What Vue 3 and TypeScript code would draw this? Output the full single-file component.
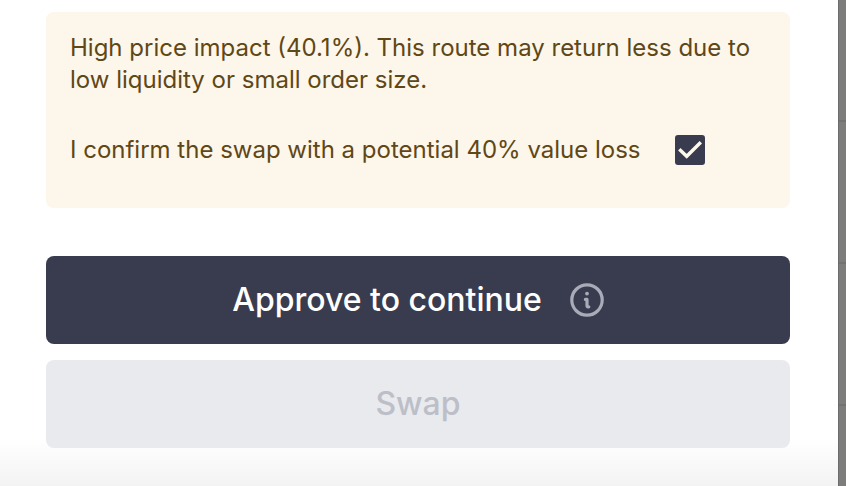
<script setup lang="ts">
import { computed, ref } from 'vue'

const priceImpact = 40.1
const confirmed = ref<boolean>(true)
const approved = ref<boolean>(false)
const valueLoss = computed<number>(() => Math.round(priceImpact))
</script>

<template>
  <div class="page">
    <main class="panel">
      <section class="warning">
        <p class="message">
          High price impact ({{ priceImpact }}%). This route may return less due to low liquidity or small order size.
        </p>
        <div class="confirm">
          <label for="confirm-loss">I confirm the swap with a potential {{ valueLoss }}% value loss</label>
          <span class="box">
            <input id="confirm-loss" v-model="confirmed" type="checkbox" />
            <svg v-if="confirmed" class="tick" viewBox="0 0 30 30" aria-hidden="true">
              <path d="M4.3 14.3 11.7 21.3 25.8 7.3" />
            </svg>
          </span>
        </div>
      </section>
      <div class="actions">
        <button class="action approve" type="button" :disabled="!confirmed" @click="approved = true">
          Approve to continue
          <svg class="info" viewBox="0 0 34 34" aria-hidden="true">
            <circle cx="17" cy="17" r="15.2" />
            <path d="M15.4 16.4h1.6v6.6q0 .8.8.8h1" />
            <circle class="dot" cx="17" cy="10.6" r="1.9" />
          </svg>
        </button>
        <button class="action swap" type="button" :disabled="!approved">Swap</button>
      </div>
    </main>
    <div class="backdrop"></div>
  </div>
</template>

<style>
body {
  margin: 0;
}
</style>

<style scoped>
.page {
  display: flex;
  min-height: 100vh;
  font-family: Inter, 'Liberation Sans', sans-serif;
  background: #fff;
}

.panel {
  flex: 1;
  min-width: 0;
  box-sizing: border-box;
  padding: 12px 48px 38px 46px;
  background: linear-gradient(to top, #f3f3f3, #fff 48px);
}

.backdrop {
  flex: 0 0 8px;
  box-sizing: border-box;
  border-left: 1px solid #6c6c6c;
  background: repeating-linear-gradient(to bottom, #7d7d7b 0 120px, #727270 120px 122px, #7d7d7b 122px 142px);
}

.warning {
  padding: 20px 24px 40px;
  border-radius: 8px;
  background: #fdf6ea;
  color: #5f4716;
  font-size: 24px;
  line-height: 32px;
}

.message {
  margin: 0 0 36px;
}

.confirm {
  display: flex;
  align-items: center;
  gap: 34px;
  padding: 2px 0;
}

.box {
  position: relative;
  display: flex;
}

.box input {
  width: 30px;
  height: 30px;
  margin: 0;
  appearance: none;
  border: 2px solid #393b4f;
  border-radius: 3px;
}

.box input:checked {
  background: #393b4f;
}

.tick {
  position: absolute;
  inset: 0;
  pointer-events: none;
  fill: none;
  stroke: #fef9ed;
  stroke-width: 3.4;
}

.actions {
  display: grid;
  gap: 16px;
  margin-top: 48px;
}

.action {
  display: flex;
  align-items: center;
  justify-content: center;
  gap: 28px;
  height: 88px;
  padding: 0 24px;
  border: 0;
  border-radius: 8px;
  font-family: inherit;
  font-size: 32px;
  font-weight: 500;
  line-height: 40px;
}

.approve {
  background: #393c4f;
  color: #fff;
}

.swap {
  background: #e8eaee;
  color: #bcbec8;
}

.info {
  width: 34px;
  height: 34px;
  fill: none;
  stroke: #a9abb8;
  stroke-width: 3.2;
  stroke-linejoin: round;
  stroke-linecap: round;
}

.dot {
  fill: #a9abb8;
  stroke: none;
}
</style>
